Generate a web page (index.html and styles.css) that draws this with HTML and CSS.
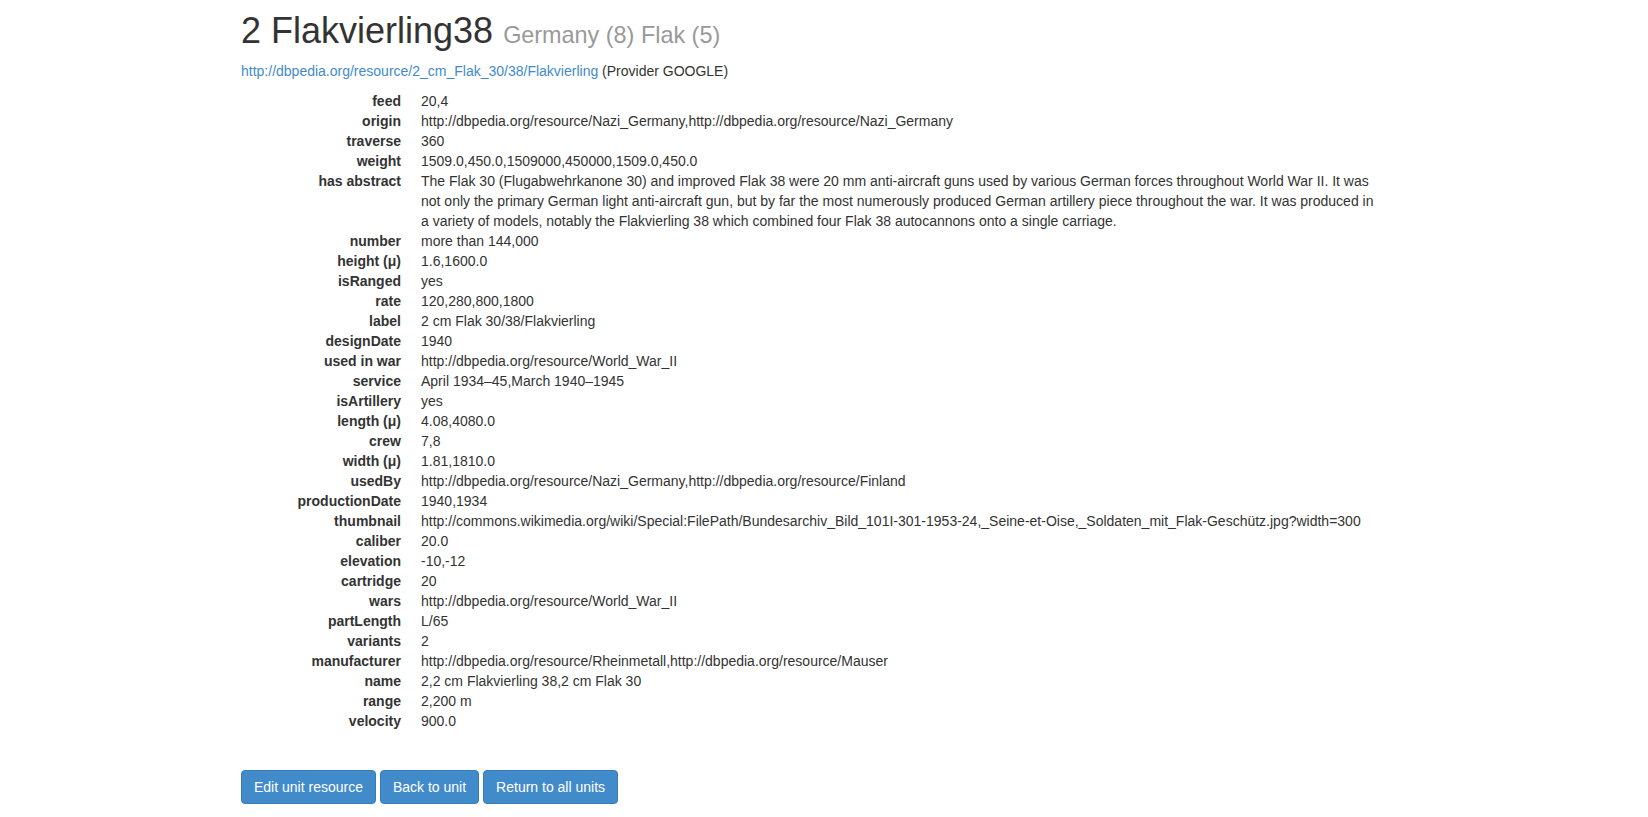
FILE: index.html
```html
<!DOCTYPE html>
<html>
<head>
<meta charset="utf-8">
<title>2 Flakvierling38</title>
<link rel="stylesheet" href="styles.css">
</head>
<body>
<div class="container">
  <h1 class="title">2 Flakvierling38 <small>Germany (8) Flak (5)</small></h1>
  <p class="source"><a href="#">http://dbpedia.org/resource/2_cm_Flak_30/38/Flakvierling</a> (Provider GOOGLE)</p>
  <dl class="props">
    <dt>feed</dt><dd>20,4</dd>
    <dt>origin</dt><dd>http://dbpedia.org/resource/Nazi_Germany,http://dbpedia.org/resource/Nazi_Germany</dd>
    <dt>traverse</dt><dd>360</dd>
    <dt>weight</dt><dd>1509.0,450.0,1509000,450000,1509.0,450.0</dd>
    <dt>has abstract</dt><dd>The Flak 30 (Flugabwehrkanone 30) and improved Flak 38 were 20 mm anti-aircraft guns used by various German forces throughout World War II. It was not only the primary German light anti-aircraft gun, but by far the most numerously produced German artillery piece throughout the war. It was produced in a variety of models, notably the Flakvierling 38 which combined four Flak 38 autocannons onto a single carriage.</dd>
    <dt>number</dt><dd>more than 144,000</dd>
    <dt>height (μ)</dt><dd>1.6,1600.0</dd>
    <dt>isRanged</dt><dd>yes</dd>
    <dt>rate</dt><dd>120,280,800,1800</dd>
    <dt>label</dt><dd>2 cm Flak 30/38/Flakvierling</dd>
    <dt>designDate</dt><dd>1940</dd>
    <dt>used in war</dt><dd>http://dbpedia.org/resource/World_War_II</dd>
    <dt>service</dt><dd>April 1934–45,March 1940–1945</dd>
    <dt>isArtillery</dt><dd>yes</dd>
    <dt>length (μ)</dt><dd>4.08,4080.0</dd>
    <dt>crew</dt><dd>7,8</dd>
    <dt>width (μ)</dt><dd>1.81,1810.0</dd>
    <dt>usedBy</dt><dd>http://dbpedia.org/resource/Nazi_Germany,http://dbpedia.org/resource/Finland</dd>
    <dt>productionDate</dt><dd>1940,1934</dd>
    <dt>thumbnail</dt><dd>http://commons.wikimedia.org/wiki/Special:FilePath/Bundesarchiv_Bild_101I-301-1953-24,_Seine-et-Oise,_Soldaten_mit_Flak-Geschütz.jpg?width=300</dd>
    <dt>caliber</dt><dd>20.0</dd>
    <dt>elevation</dt><dd>-10,-12</dd>
    <dt>cartridge</dt><dd>20</dd>
    <dt>wars</dt><dd>http://dbpedia.org/resource/World_War_II</dd>
    <dt>partLength</dt><dd>L/65</dd>
    <dt>variants</dt><dd>2</dd>
    <dt>manufacturer</dt><dd>http://dbpedia.org/resource/Rheinmetall,http://dbpedia.org/resource/Mauser</dd>
    <dt>name</dt><dd>2,2 cm Flakvierling 38,2 cm Flak 30</dd>
    <dt>range</dt><dd>2,200 m</dd>
    <dt>velocity</dt><dd>900.0</dd>
  </dl>
  <div class="actions">
    <a href="#" class="btn">Edit unit resource</a>
    <a href="#" class="btn">Back to unit</a>
    <a href="#" class="btn">Return to all units</a>
  </div>
</div>
</body>
</html>
```

FILE: styles.css
```css
html, body {
  margin: 0;
  padding: 0;
  background: #fff;
}
body {
  font-family: "Liberation Sans", Arial, Helvetica, sans-serif;
  font-size: 14px;
  line-height: 20px;
  color: #333;
}
.container {
  width: 1140px;
  padding-left: 241px;
}
.title {
  margin: 11px 0 10px;
  font-size: 36px;
  font-weight: 500;
  line-height: 1.1;
  color: #333;
}
.title small {
  font-size: 65%;
  font-weight: normal;
  color: #999;
}
.source {
  margin: 0 0 10px;
}
a {
  color: #428bca;
  text-decoration: none;
}
.props {
  margin: 9px 0 0;
  display: grid;
  grid-template-columns: 160px 1fr;
  column-gap: 20px;
}
.props dt {
  font-weight: bold;
  text-align: right;
  white-space: nowrap;
}
.props dd {
  margin: 0;
}
.actions {
  margin-top: 39px;
  display: flex;
  gap: 4px;
}
.btn {
  display: inline-block;
  padding: 6px 12px;
  font-size: 14px;
  line-height: 20px;
  color: #fff;
  background: #428bca;
  border: 1px solid #357ebd;
  border-radius: 4px;
}
```
